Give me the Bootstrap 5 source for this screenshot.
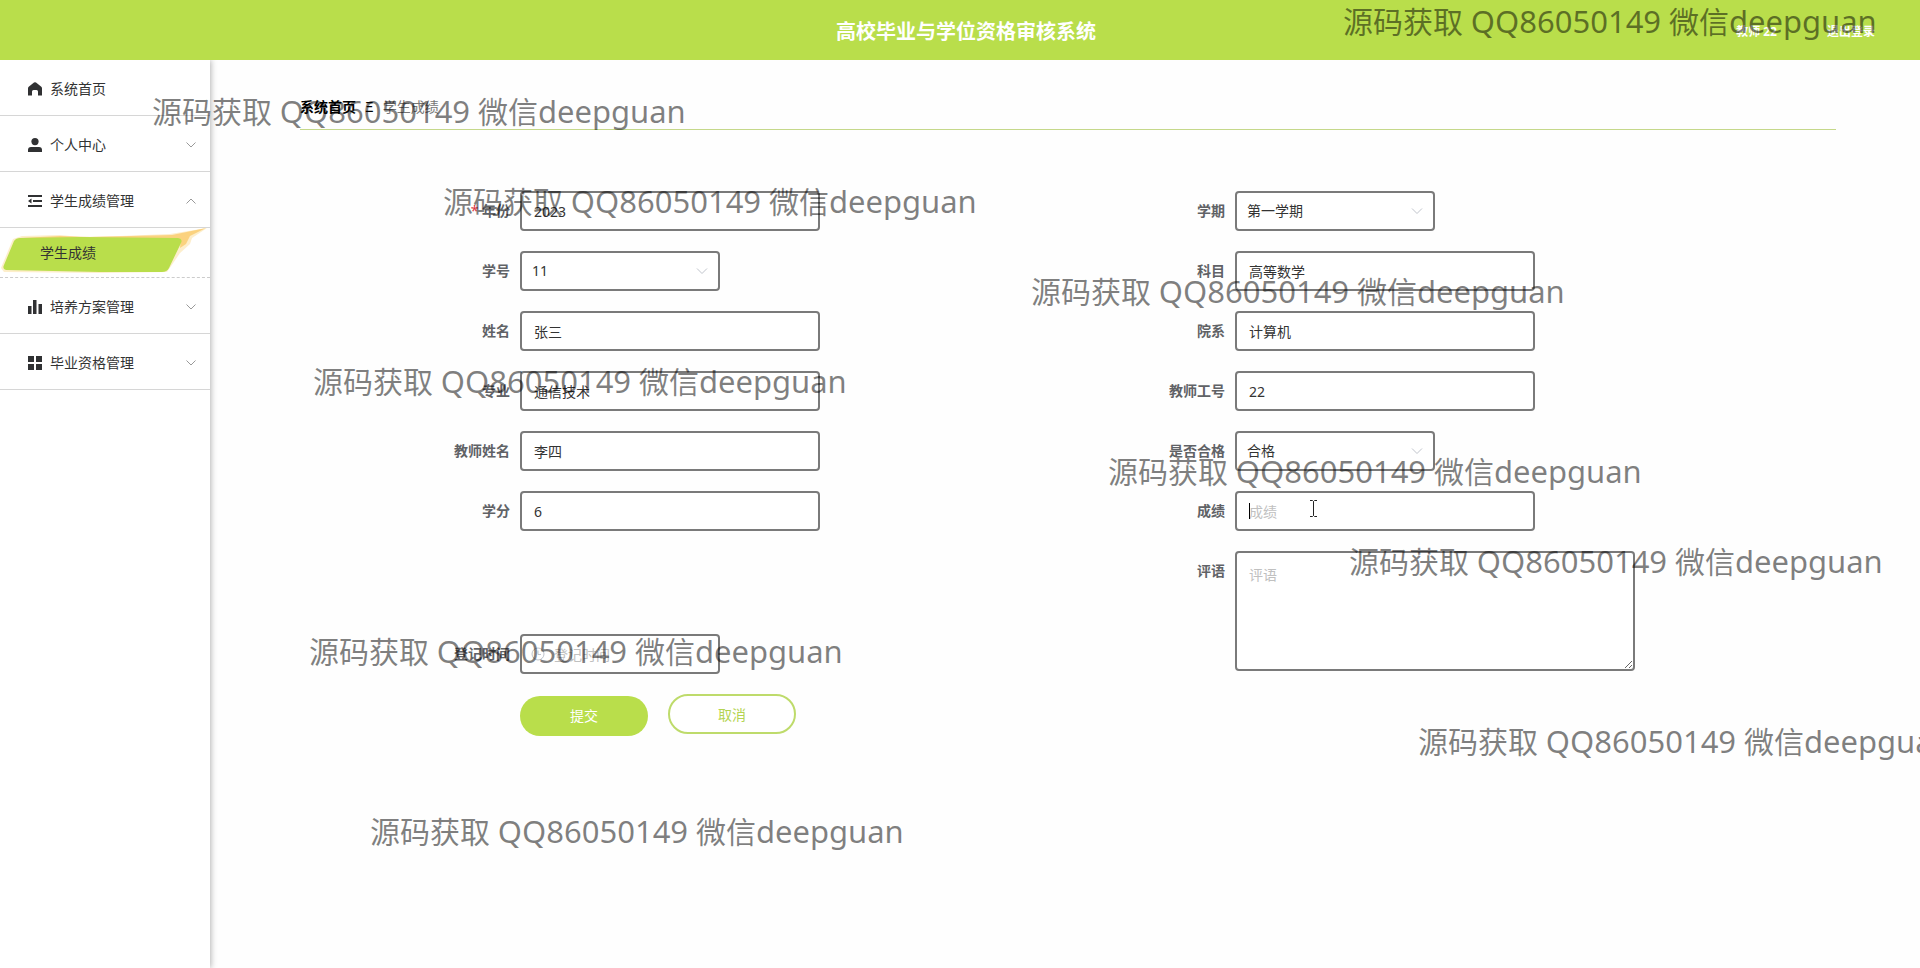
<!DOCTYPE html>
<html lang="zh-CN">
<head>
<meta charset="utf-8">
<meta name="viewport" content="width=device-width, initial-scale=1">
<title>高校毕业与学位资格审核系统</title>
<link href="https://cdn.jsdelivr.net/npm/bootstrap@5.3.0/dist/css/bootstrap.min.css" rel="stylesheet">
<style>
:root { --brand: #b9de4b; --ink: #333; --line: #7a7a7a; }
body { font-family: "Noto Sans", "Noto Sans CJK SC", sans-serif; font-size: 14px; line-height: 20px; color: var(--ink); background: #fefefe; }
.shell { min-height: 100vh; overflow: hidden; }
.topbar { display: grid; grid-template-columns: 1fr auto 1fr; height: 60px; background: var(--brand); padding: 3px 45px 0 57px; z-index: 1; }
.topbar h1 { font-size: 20px; line-height: 24px; font-weight: 700; }
.topbar-links { gap: 50px; font-size: 12px; font-weight: 700; }
.side { width: 210px; background: #fff; box-shadow: 1px 0 6px rgba(0,0,0,.3); }
.side-link { height: 56px; padding: 2px 13px 0 28px; border-bottom: 1px solid #d6d6d6; color: var(--ink); gap: 8px; }
.side-link svg:first-child { width: 14px; height: 14px; fill: #303133; }
.side-link .arrow { width: 12px; height: 12px; fill: none; stroke: #999; }
.side-sub { height: 50px; border-bottom: 1px dashed #ccc; color: var(--ink); padding-left: 40px; }
.side-sub .brush { inset: 0; width: 210px; height: 50px; }
.page { padding: 33px 84px 60px 90px; }
.crumbs { height: 37px; padding-top: 4px; border-bottom: 1px solid #c5d88a; gap: 9px; }
.crumbs a { color: #000; font-weight: 700; }
.crumbs span { color: #777; }
.entry { padding: 61px 53px 0; }
.field-label { width: 167px; padding-right: 10px; line-height: 40px; font-weight: 700; color: #606266; text-align: right; }
.field { height: 40px; border: 2px solid var(--line); border-radius: 4px; padding: 0 12px; font-size: 14px; line-height: 20px; color: var(--ink); background-color: #fff; width: 300px; }
.field::placeholder { color: #c0c0c0; opacity: 1; }
select.field { width: 200px; padding: 0 10px; appearance: none; background-repeat: no-repeat; background-position: right 10px center; background-image: url("data:image/svg+xml,%3Csvg xmlns='http://www.w3.org/2000/svg' width='12' height='12' fill='none' stroke='%23c0c4cc'%3E%3Cpath d='M1 3.5l5 5 5-5'/%3E%3C/svg%3E"); }
textarea.field { width: 400px; height: 120px; padding: 12px; resize: both; vertical-align: top; }
.date-field { width: 200px; padding-left: 32px; }
.date-icon { left: 11px; top: 13px; width: 14px; height: 14px; fill: none; stroke: #c0c4cc; }
.caret { left: 14px; top: 12px; width: 1px; height: 16px; background: #000; }
.pointer { left: 74px; top: 9px; width: 9px; height: 17px; fill: none; stroke: #222; }
.form-rows { row-gap: 20px; }
.date-row { height: 123px; }
.pill { width: 128px; height: 40px; border-radius: 20px; font-size: 14px; line-height: 20px; }
.pill-main { background: var(--brand); border: 0; color: #fff; margin-top: 2px; }
.pill-ghost { background: #fff; border: 2px solid #bedb6b; color: #b4d451; padding-top: 2px; }
.actions { padding-left: 167px; gap: 20px; }
.veil { inset: 0; padding-top: 1px; overflow: hidden; pointer-events: none; z-index: 10; }
.veil p { height: 90px; margin: 0; font-size: 30px; line-height: 40px; white-space: nowrap; color: rgba(0,0,0,.5); }
.veil span { font-size: 31px; }
</style>
</head>
<body>
<div class="shell position-relative d-flex flex-column">
  <header class="topbar position-relative align-items-center text-white">
    <span></span>
    <h1 class="m-0">高校毕业与学位资格审核系统</h1>
    <div class="topbar-links d-flex justify-content-end">
      <span>教师 22</span>
      <a class="text-white text-decoration-none" href="#">退出登录</a>
    </div>
  </header>
  <div class="d-flex flex-grow-1">
    <nav class="side flex-shrink-0" aria-label="主菜单">
      <a class="side-link d-flex align-items-center text-decoration-none" href="#"><svg viewBox="0 0 14 14"><path d="M6 .5Q7-.2 8 .5L13 4.500Q14 5.200 14 6.500V13.500H10V9.500Q10 8 8.500 8H5.500Q4 8 4 9.500V13.500H0V6.500Q0 5.200 1 4.500Z"/></svg>系统首页</a>
      <a class="side-link d-flex align-items-center text-decoration-none" href="#"><svg viewBox="0 0 14 14"><circle cx="7" cy="3.6" r="3.6"/><path d="M0 14v-2q0-3 3-3h8q3 0 3 3v2z"/></svg>个人中心<svg class="arrow ms-auto" viewBox="0 0 12 12"><path d="M1.500 3.500l4.500 4.500 4.500-4.500"/></svg></a>
      <a class="side-link d-flex align-items-center text-decoration-none" href="#"><svg viewBox="0 0 14 14"><path d="M0 1h14v2H0zM5 6h9v2H5zM0 11h14v2H0zM0 7l3.500-2.500v5z"/></svg>学生成绩管理<svg class="arrow ms-auto" viewBox="0 0 12 12"><path d="M1.500 8.500l4.500-4.500 4.500 4.500"/></svg></a>
      <a class="side-sub position-relative d-flex align-items-center text-decoration-none" href="#"><svg class="brush position-absolute" viewBox="0 0 210 50"><path fill="#fdeecb" d="M13 11L22 8 60 7 80 9 120 8 170 6 207 0 192 10 190 16 180 25 167 44 100 45 4 44 1 40Z"/><path fill="#fbd27f" d="M20 10L60 8 90 9 172 7 206 0 190 8 186 16 180 20 181 11Z"/><path fill="#b9de4b" d="M14 13Q16 10 20 10L80 9 178 10Q183 11 181 15L169 40Q167 44 162 44L100 44 6 42Q2 41 4 37Z"/></svg><span class="position-relative">学生成绩</span></a>
      <a class="side-link d-flex align-items-center text-decoration-none" href="#"><svg viewBox="0 0 14 14"><path d="M0 6h3.500V14H0zM5 0h3.500v14H5zM10.500 4H14V14h-3.500z"/></svg>培养方案管理<svg class="arrow ms-auto" viewBox="0 0 12 12"><path d="M1.500 3.500l4.500 4.500 4.500-4.500"/></svg></a>
      <a class="side-link d-flex align-items-center text-decoration-none" href="#"><svg viewBox="0 0 14 14"><path d="M0 0h6v6H0zM8 0h6v6H8zM0 8h6v6H0zM8 8h6v6H8z"/></svg>毕业资格管理<svg class="arrow ms-auto" viewBox="0 0 12 12"><path d="M1.500 3.500l4.500 4.500 4.500-4.500"/></svg></a>
    </nav>
    <main class="page flex-grow-1">
      <div class="crumbs d-flex"><a class="text-decoration-none" href="#">系统首页</a><b class="text-black fw-normal">Ξ</b><span>学生成绩</span></div>
      <form class="entry">
        <div class="form-rows d-flex flex-column">
          <div class="row g-0">
            <div class="col-6 d-flex"><label class="field-label" for="year"><span class="text-danger fw-normal">*</span> 年份</label><input class="field" id="year" value="2023"></div>
            <div class="col-6 d-flex"><label class="field-label" for="term">学期</label><select class="field" id="term"><option>第一学期</option></select></div>
          </div>
          <div class="row g-0">
            <div class="col-6 d-flex"><label class="field-label" for="sid">学号</label><select class="field" id="sid"><option>11</option></select></div>
            <div class="col-6 d-flex"><label class="field-label" for="subject">科目</label><input class="field" id="subject" value="高等数学"></div>
          </div>
          <div class="row g-0">
            <div class="col-6 d-flex"><label class="field-label" for="sname">姓名</label><input class="field" id="sname" value="张三"></div>
            <div class="col-6 d-flex"><label class="field-label" for="dept">院系</label><input class="field" id="dept" value="计算机"></div>
          </div>
          <div class="row g-0">
            <div class="col-6 d-flex"><label class="field-label" for="major">专业</label><input class="field" id="major" value="通信技术"></div>
            <div class="col-6 d-flex"><label class="field-label" for="tid">教师工号</label><input class="field" id="tid" value="22"></div>
          </div>
          <div class="row g-0">
            <div class="col-6 d-flex"><label class="field-label" for="tname">教师姓名</label><input class="field" id="tname" value="李四"></div>
            <div class="col-6 d-flex"><label class="field-label" for="pass">是否合格</label><select class="field" id="pass"><option>合格</option></select></div>
          </div>
          <div class="row g-0">
            <div class="col-6 d-flex"><label class="field-label" for="credit">学分</label><input class="field" id="credit" value="6"></div>
            <div class="col-6 d-flex"><label class="field-label" for="score">成绩</label><div class="position-relative"><input class="field" id="score" placeholder="成绩"><i class="caret position-absolute"></i><svg class="pointer position-absolute" viewBox="0 0 9 17"><path d="M1 .5h2.500l1 1 1-1H8M4.500 1.500v14M1 16.500h2.500l1-1 1 1H8"/></svg></div></div>
          </div>
          <div class="row g-0">
            <div class="date-row col-6 d-flex align-items-end"><label class="field-label" for="date">登记时间</label><div class="position-relative"><input class="field date-field" id="date" placeholder="登记时间"><svg class="date-icon position-absolute" viewBox="0 0 14 14"><circle cx="7" cy="7" r="6"/><path d="M7 3.500v4h3"/></svg></div></div>
            <div class="col-6 d-flex"><label class="field-label" for="remark">评语</label><textarea class="field" id="remark" placeholder="评语"></textarea></div>
          </div>
          <div class="actions d-flex align-items-start">
            <button class="pill pill-main" type="button">提交</button>
            <button class="pill pill-ghost" type="button">取消</button>
          </div>
        </div>
      </form>
    </main>
  </div>
  <div class="veil position-absolute" aria-hidden="true">
    <p style="margin-left:1343px">源码获取 <span>QQ86050149</span> 微信<span>deepguan</span></p>
    <p style="margin-left:152px">源码获取 <span>QQ86050149</span> 微信<span>deepguan</span></p>
    <p style="margin-left:443px">源码获取 <span>QQ86050149</span> 微信<span>deepguan</span></p>
    <p style="margin-left:1031px">源码获取 <span>QQ86050149</span> 微信<span>deepguan</span></p>
    <p style="margin-left:313px">源码获取 <span>QQ86050149</span> 微信<span>deepguan</span></p>
    <p style="margin-left:1108px">源码获取 <span>QQ86050149</span> 微信<span>deepguan</span></p>
    <p style="margin-left:1349px">源码获取 <span>QQ86050149</span> 微信<span>deepguan</span></p>
    <p style="margin-left:309px">源码获取 <span>QQ86050149</span> 微信<span>deepguan</span></p>
    <p style="margin-left:1418px">源码获取 <span>QQ86050149</span> 微信<span>deepguan</span></p>
    <p style="margin-left:370px">源码获取 <span>QQ86050149</span> 微信<span>deepguan</span></p>
  </div>
</div>
<script src="https://cdn.jsdelivr.net/npm/bootstrap@5.3.0/dist/js/bootstrap.bundle.min.js"></script>
</body>
</html>
